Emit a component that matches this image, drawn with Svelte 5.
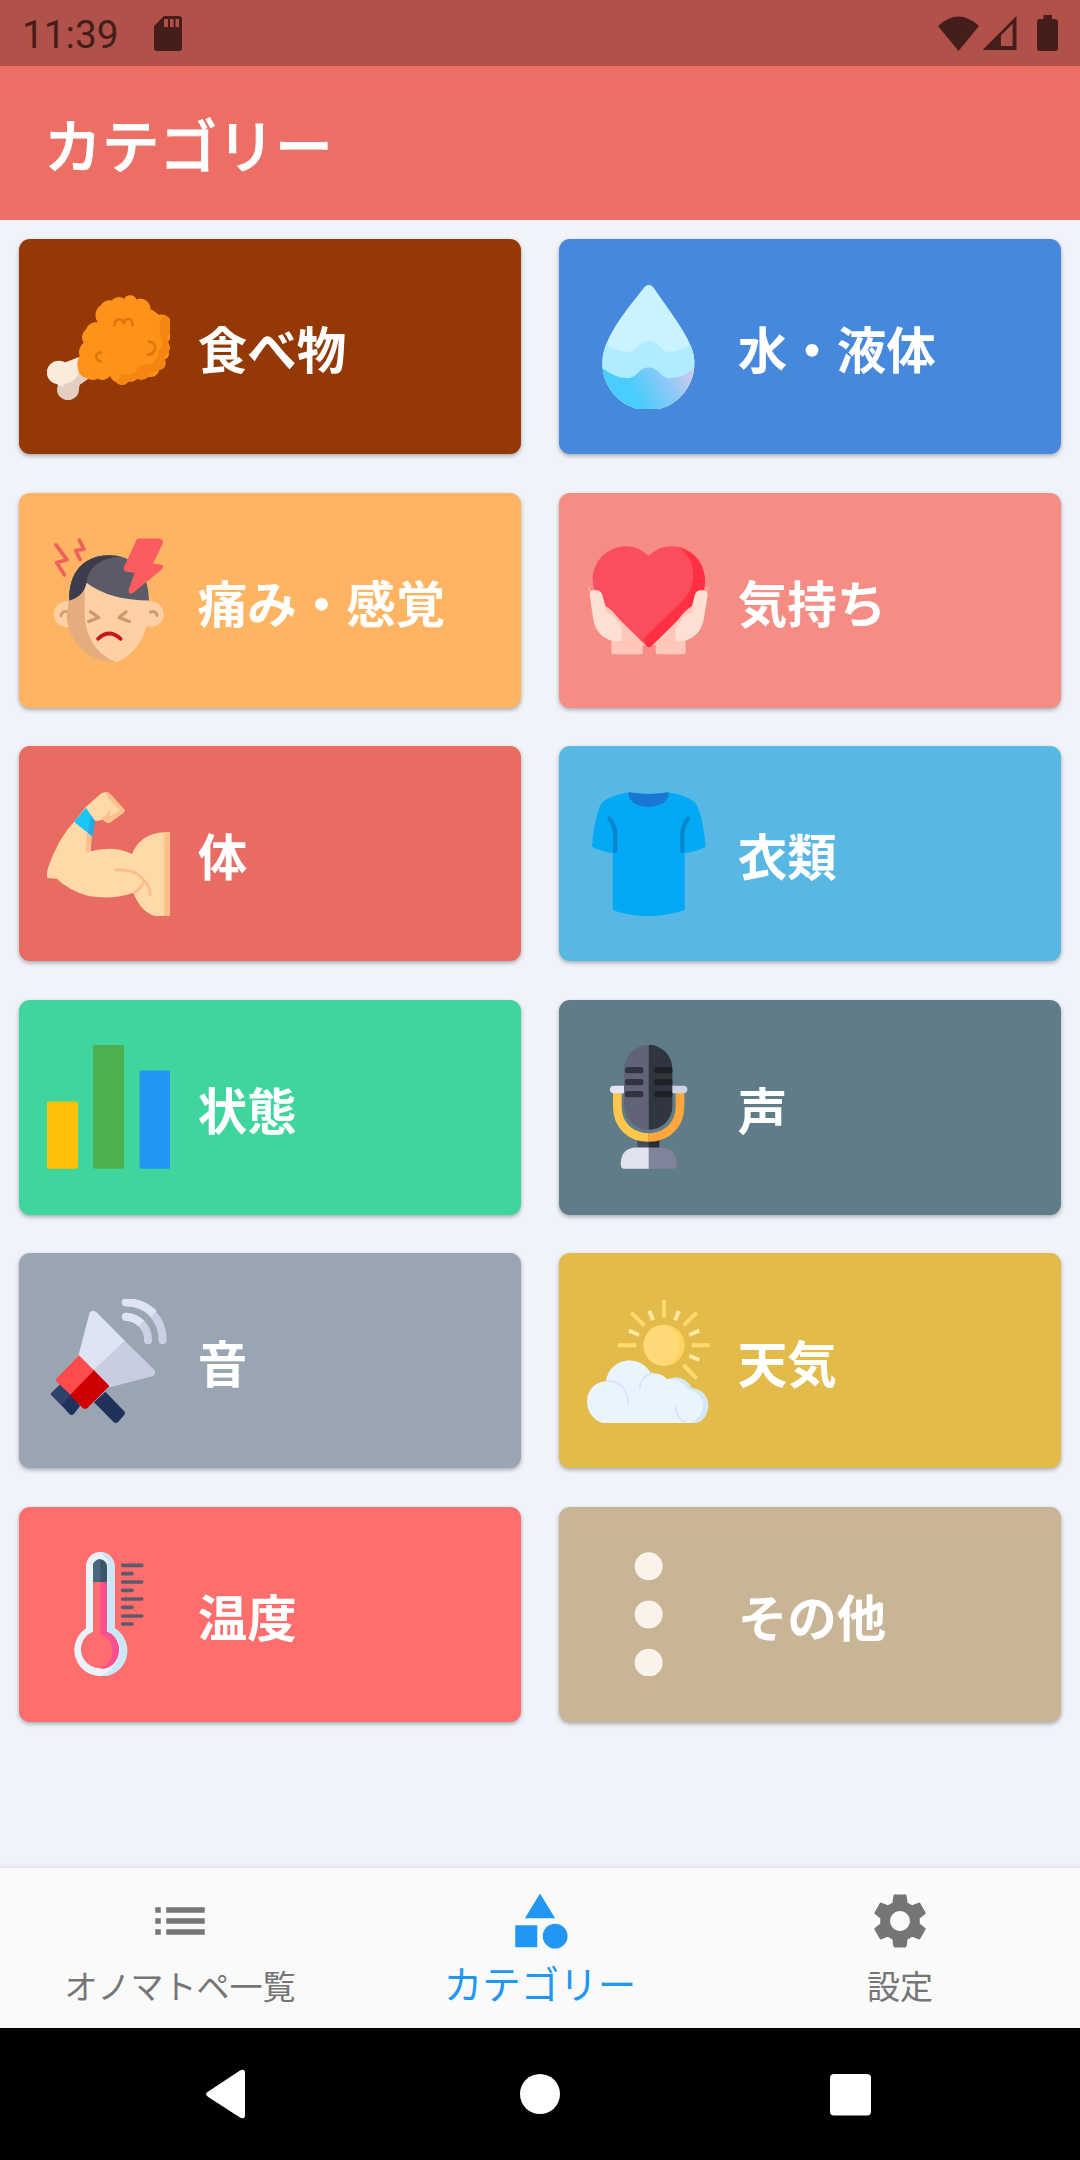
<script>
  const categories = [
    { id: 'food', label: '食べ物', color: '#943906', box: '135.7 164.6 359.3 371.3' },
    { id: 'water', label: '水・液体', color: '#4688dc', box: '135.7 164.6 359.3 371.3' },
    { id: 'pain', label: '痛み・感覚', color: '#ffb463', box: '111 115.500 369 371.25' },
    { id: 'feeling', label: '気持ち', color: '#f68d84', box: '111 115 369 371.25' },
    { id: 'body', label: '体', color: '#e86c62', box: '111 876 369 371.25' },
    { id: 'clothes', label: '衣類', color: '#58b8e3', box: '111 876 369 371.25' },
    { id: 'state', label: '状態', color: '#40d59d', box: '111 135.5 369 371.25' },
    { id: 'voice', label: '声', color: '#607c88', box: '111 135.5 369 371.25' },
    { id: 'sound', label: '音', color: '#9aa5b3', box: '111 897 369 371.25' },
    { id: 'weather', label: '天気', color: '#e2bb4b', box: '111 897 369 371.25' },
    { id: 'temperature', label: '温度', color: '#ff6d6d', box: '111 157 369 371.25' },
    { id: 'other', label: 'その他', color: '#c7b596', box: '111 157 369 371.25' },
  ];

  const tabs = [
    { id: 'list', label: 'オノマトペ一覧', path: 'M3 13h2v-2H3v2zm0 4h2v-2H3v2zm0-8h2V7H3v2zm4 4h14v-2H7v2zm0 4h14v-2H7v2zM7 7v2h14V7H7z' },
    { id: 'category', label: 'カテゴリー', path: 'M12 2l-5.5 9h11zM17.5 13a4.5 4.5 0 1 0 0 9a4.5 4.5 0 1 0 0-9zM3 13.5h8v8H3z' },
    { id: 'settings', label: '設定', path: 'M19.14 12.94c.04-.3.06-.61.06-.94 0-.32-.02-.64-.07-.94l2.03-1.58c.18-.14.23-.41.12-.61l-1.92-3.32c-.12-.22-.37-.29-.59-.22l-2.39.96c-.5-.38-1.03-.7-1.62-.94l-.36-2.54c-.04-.24-.24-.41-.48-.41h-3.84c-.24 0-.43.17-.47.41l-.36 2.54c-.59.24-1.13.57-1.62.94l-2.39-.96c-.22-.08-.47 0-.59.22L2.74 8.87c-.12.21-.08.47.12.61l2.03 1.58c-.05.3-.09.63-.09.94s.02.64.07.94l-2.03 1.58c-.18.14-.23.41-.12.61l1.92 3.32c.12.22.37.29.59.22l2.39-.96c.5.38 1.03.7 1.62.94l.36 2.54c.05.24.24.41.48.41h3.84c.24 0 .44-.17.47-.41l.36-2.54c.59-.24 1.13-.56 1.62-.94l2.39.96c.22.08.47 0 .59-.22l1.92-3.32c.12-.22.07-.47-.12-.61l-2.01-1.58zM12 15.6c-1.98 0-3.6-1.62-3.6-3.6s1.62-3.6 3.6-3.6 3.6 1.62 3.6 3.6-1.62 3.6-3.6 3.6z' },
  ];

  // long and short marks alternate down the thermometer
  const marks = [197, 222, 247, 272, 298, 323, 349, 373];

  let active = $state('category');
</script>

{#snippet art(id)}
  {#if id === 'food'}
    <circle cx="170" cy="427" r="35" fill="#fbebdc" />
    <circle cx="197" cy="478" r="32" fill="#e3cfc1" />
    <path d="M180 400L232 380L256 446L228 466L190 470Z" fill="#fbebdc" />
    <path d="M165 462Q218 466 230 424L258 444L232 462L228 480Q190 500 165 462Z" fill="#e3cfc1" />
    <path d="M180 470Q160 466 166 452L205 445Z" fill="#fbebdc" />
    <path d="M250 443A30 30 0 0 1 226 415A50 50 0 0 1 231 378A36 36 0 0 1 243 338A30 30 0 0 1 249 298A34 34 0 0 1 284 276A36 36 0 0 1 292 226A34 34 0 0 1 325 211A26 26 0 0 1 361 206A20 20 0 0 1 397 208A30 30 0 0 1 438 237A50 50 0 0 1 462 254A34 34 0 0 1 494 265A30 30 0 0 1 493 306A24 24 0 0 1 488 336A22 22 0 0 1 491 365A20 20 0 0 1 480 388A22 22 0 0 1 464 420A26 26 0 0 1 432 440A28 28 0 0 1 400 446A28 28 0 0 1 374 454A23 23 0 0 1 337 456A30 30 0 0 1 320 438A28 28 0 0 1 284 446A34 34 0 0 1 250 443Z" fill="#ff9218" />
    <path d="M472 256Q494 258 494 275V300Q484 320 490 336Q496 352 490 366Q480 374 480 390Q480 412 462 420Q448 424 432 440Q414 452 400 446Q388 448 374 454Q354 472 337 456Q354 446 348 430Q368 440 392 428Q405 400 440 402Q464 385 462 358Q482 345 466 310Q462 280 472 256Z" fill="#f48510" />
    <path d="M333 285Q335 266 348 268Q358 270 360 279Q362 268 372 266Q386 268 386 285M434 334Q453 338 452 354Q448 372 430 374M294 367Q278 370 279 380Q281 390 292 394" class="line" stroke="#de780e" stroke-width="8" />
  {:else if id === 'water'}
    <defs>
      <linearGradient id="sea" gradientUnits="userSpaceOnUse" x1="270" y1="490" x2="440" y2="400">
        <stop offset="0" stop-color="#48cdfc" />
        <stop offset=".55" stop-color="#8fc9f6" />
        <stop offset="1" stop-color="#d8c9ec" />
      </linearGradient>
      <clipPath id="drop">
        <path d="M316 164Q326 164 336 181C365 225 385 250 415 300Q450 358 450 395C450 477 390 540 316 540C240 540 180 477 180 395Q182 350 216 293C245 245 270 215 298 178Q307 164 316 164Z" />
      </clipPath>
    </defs>
    <g clip-path="url(#drop)">
      <path d="M170 150H460V560H170Z" fill="#cbf2ff" />
      <path d="M170 325Q215 365 252 365C285 365 285 333 316 333C347 333 347 365 380 365Q418 365 460 325V560H170Z" fill="#b1ebff" />
      <path d="M170 405Q215 444 252 444C285 444 285 412 316 412C347 412 347 444 380 444Q418 444 460 405V560H170Z" fill="url(#sea)" />
    </g>
  {:else if id === 'pain'}
    <circle cx="171" cy="344" r="39" fill="#ffd0a6" />
    <circle cx="423" cy="344" r="38" fill="#ffd0a6" />
    <path d="M153 349Q156 330 178 338M441 348Q438 330 416 339" class="line" stroke="#d29b70" stroke-width="9" />
    <path d="M180 290V345C180 430 240 488 320 488C375 465 418 400 418 330V285L230 235Z" fill="#ffd0a6" />
    <path d="M178 290L170 350C175 435 245 490 320 488C270 472 224 420 224 340V240Z" fill="#e3ad80" />
    <path d="M178 303C175 220 220 167 298 167C375 167 416 220 417 303Q300 303 229 250Q222 290 178 303Z" fill="#5b5a67" />
    <path d="M178 303C175 220 220 167 298 167Q320 167 330 172C270 175 235 205 229 250Q222 290 178 303Z" fill="#3d3c4c" />
    <path d="M386 117H448Q462 120 458 133L429 193L452 195Q465 198 456 209L370 280Q355 288 356 270L374 220L348 217Q337 212 343 200L377 127Q380 117 386 117Z" fill="#fb5c60" />
    <path d="M138 136L171 181L140 189L163 226M208 122L222 149L197 153L210 180" class="line" stroke="#f0605c" stroke-width="11" />
    <path d="M242 337L266 354L236 366M348 337L327 354L358 366" class="line" stroke="#cf996c" stroke-width="10" />
    <path d="M264 418Q297 386 332 418" class="line" stroke="#c3161d" stroke-width="11" />
  {:else if id === 'feeling'}
    <path d="M184 420L278 425V458Q278 464 272 464H190Q184 464 184 458ZM317 425L407 420V458Q407 464 401 464H323Q317 464 317 458Z" fill="#ffc8bb" />
    <path d="M200 350L292 438Q250 436 205 425ZM388 350L300 438Q340 436 383 425Z" fill="#ffc8b9" />
    <path d="M111 256L125 275L125 290ZM480 256L466 275L466 290Z" fill="#f9b5a9" />
    <path d="M296 168Q265 140 226 140C165 143 128 190 128 240Q130 285 165 317L290 440Q297 446 304 440L425 320Q466 290 465 240C462 180 420 140 366 140Q325 140 296 168Z" fill="#fb4d5b" />
    <path d="M387 145C435 175 443 240 410 290Q400 302 280 418L290 440Q297 446 304 440L425 320Q466 290 465 240C462 190 430 155 387 145Z" fill="#ff3042" />
    <path d="M119 285Q119 272 135 272Q154 271 157 287L168 325Q190 338 206 357Q220 380 214 425L190 424Q140 412 130 360ZM473 285Q473 272 457 272Q438 271 434 287L425 325Q403 338 387 357Q372 380 378 425L400 424Q450 412 461 360Z" fill="#fde0d3" />
    <path d="M167 320Q188 332 206 357L214 400Q205 350 167 338ZM426 320Q405 332 387 357L380 400Q388 350 426 338Z" fill="#ffc8b9" />
  {:else if id === 'body'}
    <path d="M228 920L275 879Q290 872 303 884L344 930Q346 934 340 939L299 968Q290 972 278 957Q265 966 254 961L245 1008L242 1054Q310 1035 366 1062Q386 1010 445 998L480 996V1248H435Q392 1235 370 1178Q310 1200 235 1188Q175 1170 140 1136L112 1134Q108 1120 116 1098Q145 1015 194 963Z" fill="#ffdaa8" />
    <path d="M284 877Q295 873 303 884L344 930Q346 934 340 939L299 968Q292 971 284 958L330 932L297 896ZM245 1005L242 1054L227 1058L230 996ZM463 997L480 996V1248H463Z" fill="#ffbf8c" />
    <path d="M278 957Q297 950 297 936M318 1110Q378 1106 402 1142Q422 1160 420 1184M402 1146Q390 1168 372 1178" class="line" stroke="#fdbd8b" stroke-width="8" />
    <path d="M228 923L254 962L248 1010L192 965Z" fill="#16c6fb" />
    <path d="M243 947L255 963L248 1010L234 999Z" fill="#2da5e1" />
  {:else if id === 'clothes'}
    <path d="M236 877Q296 887 355 877Q430 890 443 920Q460 960 467 1040Q438 1055 404 1059V1230Q350 1248 296 1248Q235 1248 188 1230V1059Q155 1055 126 1040Q130 970 150 917Q165 890 236 877Z" fill="#03a9f4" />
    <path d="M236 877Q296 887 355 877C362 935 230 935 236 877Z" fill="#1976d2" />
    <path d="M178 956Q195 975 196 1005V1053M414 956Q398 975 397 1005V1053" class="line" stroke="#0288d1" stroke-width="13" />
  {:else if id === 'state'}
    <rect x="110" y="305" width="94" height="202" rx="7" fill="#ffc107" />
    <rect x="249" y="135" width="93" height="372" rx="7" fill="#4caf50" />
    <rect x="389" y="212" width="92" height="295" rx="7" fill="#2196f3" />
  {:else if id === 'voice'}
    <path d="M262 418H297V448H262Z" fill="#484b5b" />
    <path d="M296 418H328V448H296Z" fill="#292d34" />
    <path d="M222 507Q212 507 212 490Q215 443 260 443H297V507Z" fill="#dfe3ef" />
    <path d="M296 443H336Q376 445 381 490Q381 507 372 507H296Z" fill="#7e8499" />
    <path d="M202 275V320C202 380 245 413 296 413" fill="none" stroke="#ffc64c" stroke-width="26" />
    <path d="M296 413C350 413 390 375 390 320V275" fill="none" stroke="#ffa73c" stroke-width="26" />
    <rect x="180" y="258" width="60" height="22" rx="11" fill="#e3e7f3" />
    <rect x="350" y="258" width="62" height="22" rx="11" fill="#d0d5e3" />
    <path d="M296 135A74 74 0 0 0 222 209V316A74 74 0 0 0 296 390Z" fill="#606476" />
    <path d="M296 135A71 71 0 0 1 367 206V319A71 71 0 0 1 296 390Z" fill="#30353f" />
    <path d="M234 211H271M234 247H271M234 283H271" class="line" stroke="#303440" stroke-width="19" />
    <path d="M322 211H358M322 247H358M322 283H358" class="line" stroke="#1e2023" stroke-width="19" />
  {:else if id === 'sound'}
    <path d="M146 1157Q152 1150 160 1156L186 1190L158 1220L124 1186Q120 1182 124 1178Z" fill="#30426c" />
    <path d="M185 1182L210 1218L192 1242Q185 1248 178 1242L155 1216ZM252 1207L286 1175L342 1233Q348 1239 342 1246L325 1265Q317 1272 310 1265Z" fill="#20315a" />
    <path d="M238 941Q242 928 258 935L346 1024L250 1113L205 1068Z" fill="#dfe4f4" />
    <path d="M344 1022L430 1106Q441 1117 430 1128L300 1162L248 1113Z" fill="#c8cde0" />
    <path d="M207 1066L254 1113L182 1184L141 1147Q135 1140 141 1134Z" fill="#ff4b4d" />
    <path d="M252 1111L298 1158L233 1223Q225 1230 217 1223L180 1185Z" fill="#cf0001" />
    <path d="M347 950C385 952 415 982 414 1021M347 907C410 907 458 955 458 1021" class="line" stroke="#cbd0e2" stroke-width="24" />
    <path d="M347 950Q376 952 394 970M347 907Q398 907 432 941" fill="none" stroke="#dfe4f4" stroke-width="24" />
    <circle cx="348" cy="950" r="12" fill="#dfe4f4" />
    <circle cx="348" cy="907" r="12" fill="#dfe4f4" />
  {:else if id === 'weather'}
    <path d="M342 899V953M244 938L283 977M204 1036H259M440 938L401 976M425 1036H479M400 1095L440 1135" class="ray" stroke="#ffda6e" stroke-width="12" />
    <path d="M298 932L309 960M387 933L375 961M237 992L267 1005M448 992L418 1005M418 1067L448 1080" class="ray" stroke="#ffe9a2" stroke-width="12" />
    <circle cx="342" cy="1036" r="62" fill="#ffd263" />
    <ellipse cx="335" cy="1036" rx="54" ry="60" fill="#ffda76" />
    <path d="M168 1144A71 71 0 0 1 302 1120Q332 1116 352 1138Q400 1120 425 1165C460 1168 476 1195 475 1220Q470 1262 435 1270H160C130 1262 111 1235 111 1204C111 1170 136 1145 168 1144Z" fill="#eaf4ff" />
    <path d="M352 1138Q400 1120 425 1165C460 1168 476 1195 475 1220Q470 1262 435 1270H420Q460 1250 460 1210Q453 1180 412 1167Q395 1135 352 1138Z" fill="#d5e7fa" />
    <path d="M172 1142C212 1144 235 1170 234 1208M269 1165Q271 1130 305 1120M377 1220C377 1245 390 1262 410 1270" class="line" stroke="#d7e7f9" stroke-width="6" />
  {:else if id === 'temperature'}
    <path d="M228 200A43 43 0 0 1 314 200V386A78 78 0 1 1 228 386Z" fill="#eaf3fa" />
    <path d="M271 158A43 43 0 0 1 314 200V386A78 78 0 0 1 270 531Q340 500 325 425L292 392V180Z" fill="#cbe6f5" />
    <path d="M249 246H291V396A57 57 0 1 1 249 396Z" fill="#ff6d70" />
    <path d="M271 246H291V396C348 418 335 510 270 508C320 485 315 425 283 408Q271 405 271 396Z" fill="#fb4f91" />
    <path d="M249 247V200A21 21 0 0 1 291 200V247Z" fill="#3c5669" />
    <path d="M249 247V200A21 21 0 0 1 271 179V247Z" fill="#4a687b" />
    {#each marks as y, index}
      <path d="M338 {y}H{index % 2 ? 366 : 395}" class="line" stroke="#5d5a6b" stroke-width="11" />
    {/each}
  {:else if id === 'other'}
    {#each [200, 344.5, 489] as y}
      <circle cx="296" cy={y} r="42" fill="#f9f3e9" />
    {/each}
  {/if}
{/snippet}

<div class="screen">
  <div class="status">
    <span class="time">11:39</span>
    <svg class="sd" viewBox="0 0 28 35" aria-hidden="true">
      <path fill-rule="evenodd" d="M10 0H25Q28 0 28 3V32Q28 35 25 35H3Q0 35 0 32V10ZM10 3V11H14V3ZM16 3V11H19.500V3ZM21.500 3V11H25V3Z" />
    </svg>
    <span class="spacer"></span>
    <svg class="wifi" viewBox="0 0 42 35" aria-hidden="true"><path d="M0 10Q20.500-9 41 10L20.500 35Z" /></svg>
    <svg class="signal" viewBox="0 0 35 35" aria-hidden="true"><path fill-rule="evenodd" d="M35 0V35H0ZM19 20V31H31V8Z" /></svg>
    <svg class="battery" viewBox="0 0 21 36" aria-hidden="true"><path d="M6.500 0H15V4H18Q21 4 21 7V33Q21 36 18 36H3Q0 36 0 33V7Q0 4 3 4H6.500Z" /></svg>
  </div>

  <header><h1>カテゴリー</h1></header>

  <main>
    {#each categories as { id, label, color, box } (id)}
      <button class="card" style="background-color: {color}">
        <svg viewBox={box} preserveAspectRatio="none" aria-hidden="true">{@render art(id)}</svg>
        <span>{label}</span>
      </button>
    {/each}
  </main>

  <nav>
    {#each tabs as tab (tab.id)}
      <button class="tab {active === tab.id ? 'active' : ''}" onclick={() => active = tab.id}>
        <svg viewBox="0 0 24 24" aria-hidden="true"><path d={tab.path} /></svg>
        <span>{tab.label}</span>
      </button>
    {/each}
  </nav>

  <div class="system">
    <svg viewBox="0 0 1080 132" aria-hidden="true">
      <path d="M209 63L240 42.500Q245 40 245 45V87Q245 92 240 89.500L209 69.500Q203 66 209 63Z" />
      <circle cx="540" cy="66" r="20" />
      <rect x="830" y="46" width="41" height="41.500" rx="4" />
    </svg>
  </div>
</div>

<style>
  :global(body) {
    margin: 0;
  }

  .screen {
    width: 1080px;
    height: 2160px;
    display: flex;
    flex-direction: column;
    background-color: #f0f3f9;
    font-family: Roboto, "Noto Sans CJK JP", sans-serif;
    overflow: hidden;
  }

  button {
    border: 0;
    margin: 0;
    font-family: inherit;
  }

  .status {
    height: 66px;
    box-sizing: border-box;
    padding: 0 22px;
    display: flex;
    align-items: center;
    background-color: #b05249;
    color: #451e1b;
    fill: #451e1b;
  }

  .time {
    width: 132px;
    font-size: 38.8px;
    line-height: 66px;
    padding-top: 3px;
  }

  .sd {
    width: 28px;
    height: 35px;
  }

  .spacer {
    flex: 1;
  }

  .wifi {
    width: 42px;
    height: 35px;
    margin-right: 2px;
  }

  .signal {
    width: 35px;
    height: 34px;
    margin-right: 20px;
  }

  .battery {
    width: 21px;
    height: 36px;
  }

  header {
    height: 154px;
    padding-left: 44px;
    display: flex;
    align-items: center;
    background-color: #ec6e65;
  }

  h1 {
    margin: 0;
    color: white;
    font-family: "Noto Sans CJK JP", sans-serif;
    font-size: 57.75px;
    font-weight: 500;
    line-height: 80px;
    -webkit-text-stroke: 0.9px white;
  }

  main {
    flex: 1;
    padding: 19.25px;
    display: grid;
    grid-template-columns: 1fr 1fr;
    grid-auto-rows: 215px;
    align-content: start;
    gap: 38.5px;
  }

  .card {
    display: flex;
    align-items: center;
    gap: 28px;
    padding: 0 27.5px;
    border-radius: 11px;
    box-shadow: 0 2px 4px rgba(0, 0, 0, 0.3);
    color: white;
    font-family: "Noto Sans CJK JP", sans-serif;
    font-size: 49.5px;
    font-weight: 700;
    line-height: 72px;
    white-space: nowrap;
  }

  .card svg {
    width: 123px;
    height: 123.75px;
    flex-shrink: 0;
  }

  .card span {
    padding-top: 3px;
  }

  .line {
    fill: none;
    stroke-linecap: round;
    stroke-linejoin: round;
  }

  .ray {
    fill: none;
  }

  nav {
    height: 160px;
    display: grid;
    grid-template-columns: repeat(3, 1fr);
    background-color: #fafafa;
    box-shadow: 0 -1px 5px rgba(0, 0, 0, 0.1);
  }

  .tab {
    display: flex;
    flex-direction: column;
    align-items: center;
    padding: 20px 0 0;
    background-color: transparent;
    color: #757575;
    fill: #757575;
    font-family: "Noto Sans CJK JP", sans-serif;
    font-size: 33px;
    line-height: 62px;
  }

  .tab svg {
    width: 66px;
    height: 66px;
  }

  .tab.active {
    color: #2196f3;
    fill: #2196f3;
    font-size: 38.5px;
    line-height: 56px;
  }

  .system {
    height: 132px;
    background-color: black;
    fill: white;
  }

  .system svg {
    display: block;
    width: 100%;
    height: 100%;
  }
</style>
